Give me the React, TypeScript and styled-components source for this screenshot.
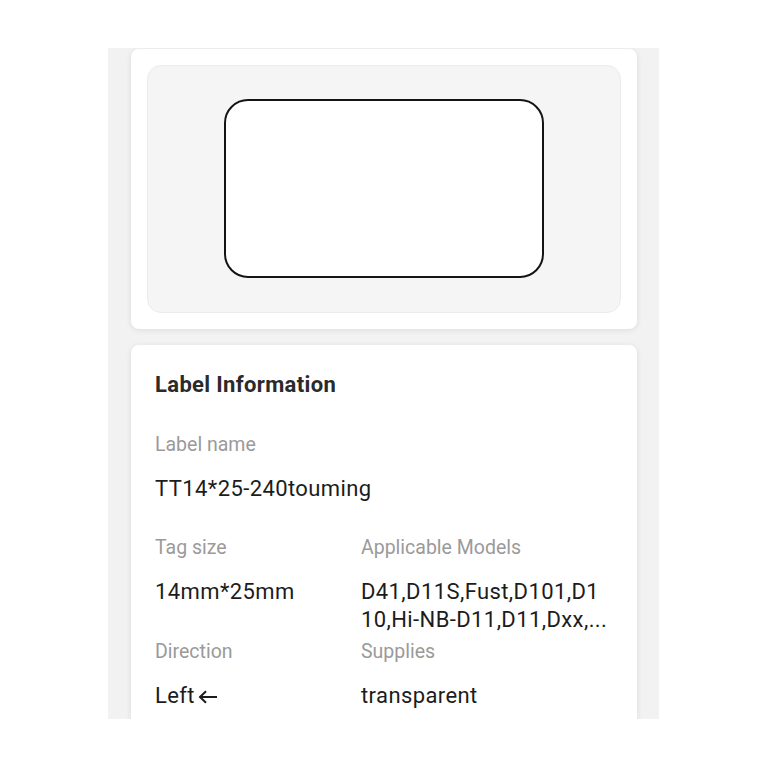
import React from "react";
import styled, { createGlobalStyle } from "styled-components";

const Global = createGlobalStyle`
  html, body { margin: 0; padding: 0; background: #ffffff; }
  body { font-family: Roboto, "Noto Sans", "Liberation Sans", sans-serif; }
  * { box-sizing: border-box; }
`;

const Page = styled.div`
  width: 768px;
  height: 768px;
  padding: 48px 0 0 108px;
  background: #ffffff;
`;

const Screen = styled.div`
  width: 551px;
  height: 671px;
  background: #f2f2f2;
  overflow: hidden;
  display: flex;
  flex-direction: column;
  gap: 16px;
  padding: 1px 22px 0 23px;
`;

const Card = styled.div<{ $grow?: boolean }>`
  background: #ffffff;
  border-radius: 8px;
  box-shadow: 0 1px 6px rgba(0, 0, 0, 0.09);
  flex-shrink: 0;
  ${(p) => (p.$grow ? "min-height: 420px;" : "")}
`;

const PreviewCard = styled(Card)`
  padding: 16px;
  height: 280px;
`;

const PreviewPanel = styled.div`
  height: 100%;
  background: #f5f5f5;
  border: 1px solid #ebebeb;
  border-radius: 14px;
  display: flex;
  align-items: center;
  justify-content: center;
`;

const LabelShape = styled.div`
  width: 320px;
  height: 179px;
  border: 2px solid #141414;
  border-radius: 24px;
  background: #ffffff;
  margin-top: -2px;
`;

const InfoCard = styled(Card)`
  padding: 26px 24px 40px 24px;
`;

const Title = styled.div`
  font-size: 22px;
  font-weight: 700;
  letter-spacing: 0.35px;
  color: #2a2a2a;
  line-height: 28px;
  margin-bottom: 34px;
`;

const Grid = styled.div`
  display: grid;
  grid-template-columns: 206px 1fr;
  column-gap: 0;
`;

const Field = styled.div<{ $span?: boolean }>`
  display: flex;
  flex-direction: column;
  gap: 18px;
  margin-bottom: 33px;
  ${(p) => (p.$span ? "grid-column: 1 / span 2;" : "")}
`;

const CompactField = styled(Field)`
  margin-bottom: 6px;
`;

const FieldLabel = styled.div`
  font-size: 19.5px;
  line-height: 24px;
  color: #9a9a9a;
`;

const FieldValue = styled.div<{ $wrap?: boolean }>`
  font-size: 22px;
  letter-spacing: 0.4px;
  line-height: 28px;
  color: #1c1c1c;
  display: flex;
  align-items: center;
  gap: 3px;
  ${(p) =>
    p.$wrap
      ? `
    display: block;
    max-width: 249px;
    word-break: break-all;
  `
      : ""}
`;

const Arrow = () => (
  <svg width="20" height="14" viewBox="0 0 20 14" fill="none" style={{ marginTop: 1 }}>
    <path d="M19 7H2M8 1.2L2 7l6 5.8" stroke="#1c1c1c" strokeWidth="2" />
  </svg>
);

export default function App() {
  return (
    <>
      <Global />
      <Page>
        <Screen>
          <PreviewCard>
            <PreviewPanel>
              <LabelShape />
            </PreviewPanel>
          </PreviewCard>
          <InfoCard $grow>
            <Title>Label Information</Title>
            <Grid>
              <Field $span>
                <FieldLabel>Label name</FieldLabel>
                <FieldValue>TT14*25-240touming</FieldValue>
              </Field>
              <CompactField>
                <FieldLabel>Tag size</FieldLabel>
                <FieldValue>14mm*25mm</FieldValue>
              </CompactField>
              <CompactField>
                <FieldLabel>Applicable Models</FieldLabel>
                <FieldValue $wrap>D41,D11S,Fust,D101,D110,Hi-NB-D11,D11,Dxx,...</FieldValue>
              </CompactField>
              <Field>
                <FieldLabel>Direction</FieldLabel>
                <FieldValue>
                  Left
                  <Arrow />
                </FieldValue>
              </Field>
              <Field>
                <FieldLabel>Supplies</FieldLabel>
                <FieldValue>transparent</FieldValue>
              </Field>
            </Grid>
          </InfoCard>
        </Screen>
      </Page>
    </>
  );
}
